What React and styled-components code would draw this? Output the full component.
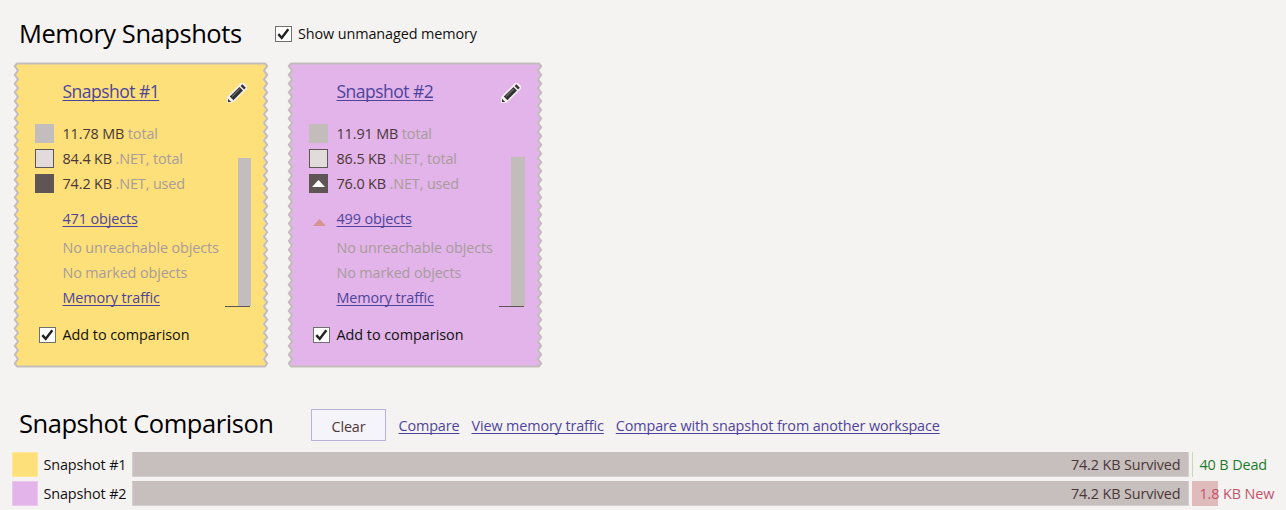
import React from 'react';
import styled, { createGlobalStyle } from 'styled-components';

const GlobalStyle = createGlobalStyle`
  * { box-sizing: border-box; }
  body {
    margin: 0;
    background: #f5f3f2;
    color: #111;
    font: 14.4px/25px "Open Sans", "Noto Sans", sans-serif;
    letter-spacing: -0.12px;
    overflow: hidden;
  }
`;

const Page = styled.main`
  display: flex;
  flex-direction: column;
  height: 510px;
  padding: 14px 0 0 12px;
`;

const Header = styled.header`
  display: flex;
  align-items: center;
  height: 40px;
  padding-left: 7px;
`;

const Heading = styled.h1`
  margin: 0;
  padding-bottom: ${(p) => p.$lift}px;
  width: ${(p) => p.$width}px;
  flex: none;
  white-space: nowrap;
  font-size: 25.5px;
  font-weight: 400;
  line-height: 37px;
  color: #000;
  letter-spacing: -0.45px;
`;

const Link = styled.a`
  color: #4e449c;
  white-space: nowrap;
  justify-self: start;
  text-decoration: underline 1px;
  text-underline-offset: 1.5px;
  text-decoration-skip-ink: none;
`;

const CheckLabel = styled.label`
  display: flex;
  align-items: center;
  gap: ${(p) => p.$gap ?? 6}px;
  white-space: nowrap;
`;

const CheckText = styled.span`
  padding-bottom: ${(p) => p.$lift ?? 0}px;
  letter-spacing: ${(p) => p.$spacing ?? -0.1}px;
`;

const CheckSvg = styled.svg`
  display: block;
  flex: none;
`;

const Cards = styled.section`
  display: flex;
  gap: 18px;
  margin: 8px 0 0 1px;
  height: 306px;
`;

const CardRoot = styled.article`
  position: relative;
  width: 256px;
  height: 306px;
  padding: 17px 18px 0 22px;
`;

const CardShape = styled.svg`
  position: absolute;
  inset: 0;
`;

const CardContent = styled.div`
  position: relative;
  display: flex;
  flex-direction: column;
`;

const CardTitle = styled.div`
  display: flex;
  justify-content: space-between;
  align-items: center;
  height: 25px;
  padding: 0 4px 0 27.5px;
  margin-bottom: 17px;
`;

const TitleLink = styled(Link)`
  font-size: 17.5px;
  letter-spacing: -0.52px;
`;

const PencilSvg = styled.svg`
  display: block;
  margin-top: 3px;
`;

const CardBody = styled.div`
  display: flex;
  justify-content: space-between;
  height: 189px;
`;

const Stats = styled.div`
  display: flex;
  flex-direction: column;
`;

const StatRow = styled.div`
  display: grid;
  grid-template-columns: 19px auto;
  column-gap: 8.5px;
  align-items: center;
  height: 25px;
  flex: none;
  margin-top: ${(p) => p.$top ?? 0}px;
  white-space: nowrap;
  color: #4b3738;
`;

const Muted = styled.span`
  color: #a89c9c;
`;

const Swatch = styled.span`
  display: flex;
  align-items: center;
  justify-content: center;
  width: 19px;
  height: 19px;
  background: ${(p) => p.$fill};
  border: ${(p) => (p.$outlined ? '1px solid #5f5555' : '0')};
`;

const Trend = styled.span`
  display: flex;
  align-items: center;
  justify-content: center;
  padding: 8px 0 0 2px;
`;

const Gauge = styled.div`
  display: flex;
  flex-direction: column;
  align-items: flex-end;
  align-self: flex-end;
  width: 25px;
  margin: 0 1px 3px 0;
  border-bottom: 1px solid #5f5555;
`;

const GaugeBar = styled.div`
  width: ${(p) => p.$width}px;
  height: ${(p) => p.$height}px;
  margin-right: -1px;
  background: ${(p) => p.$fill};
`;

const CardFooter = styled.div`
  display: flex;
  align-items: center;
  height: 25px;
  margin-top: 12px;
  padding-left: 4px;
`;

const Actions = styled.nav`
  display: flex;
  align-items: center;
  gap: 12px;
  padding-top: 2px;
`;

const ClearButton = styled.button`
  width: 75px;
  height: 32px;
  padding: 3px 0 0;
  margin-right: 0.5px;
  border: 1px solid #b8b2d6;
  background: #f5f4fa;
  color: #4b3738;
  font: inherit;
  letter-spacing: -0.15px;
`;

const Comparison = styled.section`
  display: flex;
  flex-direction: column;
  margin-top: 36px;
`;

const Bars = styled.div`
  display: flex;
  flex-direction: column;
  gap: 4px;
  margin-top: 8px;
`;

const BarRow = styled.div`
  display: grid;
  grid-template-columns: 26px 94px 1056.5px 1fr;
  height: 25px;
  line-height: 25px;
  white-space: nowrap;
`;

const ColorKey = styled.span`
  background: ${(p) => p.$fill};
  box-shadow: inset 0 0 0 1px rgba(255, 255, 255, 0.25);
`;

const RowName = styled.span`
  padding-left: 5.5px;
`;

const Survived = styled.span`
  padding-right: 7px;
  text-align: right;
  background: #c6bfbe;
  color: #4b3738;
  border: solid #d5d0cf;
  border-width: 0 1px;
  box-shadow: inset 0 -1px #d5d0cf;
`;

const Change = styled.span`
  margin-left: 3.5px;
  padding-left: 7.5px;
  color: ${(p) => p.$color};
  background: linear-gradient(${(p) => p.$fill}, ${(p) => p.$fill}) 0 0 / ${(p) => p.$amount}px 100% no-repeat;
`;

function Check() {
  return (
    <CheckSvg width="17" height="16" viewBox="0 0 17 16">
      <rect x=".5" y=".5" width="16" height="15" fill="#fff" stroke="#707070" />
      <path d="M3.3 8.2 6.7 11.9 13.3 3.3" fill="none" stroke="#222" strokeWidth="2.5" />
    </CheckSvg>
  );
}

function Pencil() {
  return (
    <PencilSvg width="20" height="20" viewBox="0 0 20 20">
      <path d="M0 20V14L14 0H17L20 3V6L6 19.5Z" fill="#f4efee" />
      <path d="M1 19V15.8L4.2 19ZM2.8 13.6 12.5 4 16 7.5 6.4 17.2ZM13.6 3 15.4 1.3 18.8 4.7 17.1 6.5Z" fill="#333" />
      <path d="M5.2 13.4 12.6 6" stroke="#999191" strokeWidth="1" />
    </PencilSvg>
  );
}

function Triangle({ fill }) {
  return (
    <svg width="13" height="7" viewBox="0 0 13 7">
      <path d="M0 7 6.5 0 13 7Z" fill={fill} />
    </svg>
  );
}

const TEETH = 35;
const PITCH = 8.74;

function ticketPath() {
  const left = [];
  const right = [];
  for (let i = 0; i < TEETH; i += 1) {
    const tip = 4.2 + i * PITCH;
    right.push(`L254.2 ${tip}`);
    left.unshift(`L1.8 ${tip}`);
    if (i < TEETH - 1) {
      right.push(`L251 ${tip + PITCH / 2}`);
      left.unshift(`L5 ${tip + PITCH / 2}`);
    }
  }
  return `M4 1.5H252${right.join('')}L252 304.5H4${left.join('')}Z`;
}

const EDGE_PATH = ticketPath();

function Card({ data }) {
  return (
    <CardRoot>
      <CardShape width="256" height="306" viewBox="0 0 256 306">
        <path d={EDGE_PATH} fill={data.color} stroke={data.edge} strokeWidth="2" strokeLinejoin="round" />
      </CardShape>
      <CardContent>
        <CardTitle>
          <TitleLink>{data.name}</TitleLink>
          <Pencil />
        </CardTitle>
        <CardBody>
          <Stats>
            <StatRow><Swatch $fill={data.edge} /><span>{data.total} <Muted>total</Muted></span></StatRow>
            <StatRow><Swatch $fill="#e1dbdb" $outlined /><span>{data.netTotal} <Muted>.NET, total</Muted></span></StatRow>
            <StatRow>
              <Swatch $fill="#5f5555">{data.grew && <Triangle fill="#fff" />}</Swatch>
              <span>{data.netUsed} <Muted>.NET, used</Muted></span>
            </StatRow>
            <StatRow $top={10}>
              <Trend>{data.grew && <Triangle fill="#d4948f" />}</Trend>
              <Link>{data.objects}</Link>
            </StatRow>
            <StatRow $top={4}><span /><Muted>No unreachable objects</Muted></StatRow>
            <StatRow><span /><Muted>No marked objects</Muted></StatRow>
            <StatRow><span /><Link>Memory traffic</Link></StatRow>
          </Stats>
          <Gauge><GaugeBar $width={data.barWidth} $height={data.bar} $fill={data.edge} /></Gauge>
        </CardBody>
        <CardFooter>
          <CheckLabel $gap={6.5}><Check /><CheckText $spacing={-0.03}>Add to comparison</CheckText></CheckLabel>
        </CardFooter>
      </CardContent>
    </CardRoot>
  );
}

const snapshots = [
  { name: 'Snapshot #1', color: '#fde079', edge: '#c4bdbe', total: '11.78 MB', netTotal: '84.4 KB', netUsed: '74.2 KB', objects: '471 objects', bar: 148, barWidth: 13, grew: false },
  { name: 'Snapshot #2', color: '#e2b4e9', edge: '#c2bdbb', total: '11.91 MB', netTotal: '86.5 KB', netUsed: '76.0 KB', objects: '499 objects', bar: 149, barWidth: 14, grew: true },
];

export default function App() {
  return (
    <Page>
      <GlobalStyle />
      <Header>
        <Heading $width={256} $lift={2}>Memory Snapshots</Heading>
        <CheckLabel><Check /><CheckText $lift={1}>Show unmanaged memory</CheckText></CheckLabel>
      </Header>
      <Cards>
        {snapshots.map((s) => <Card key={s.name} data={s} />)}
      </Cards>
      <Comparison>
        <Header>
          <Heading $width={292} $lift={1}>Snapshot Comparison</Heading>
          <Actions>
            <ClearButton>Clear</ClearButton>
            <Link>Compare</Link>
            <Link>View memory traffic</Link>
            <Link>Compare with snapshot from another workspace</Link>
          </Actions>
        </Header>
        <Bars>
          <BarRow>
            <ColorKey $fill="#fde079" />
            <RowName>Snapshot #1</RowName>
            <Survived>74.2 KB Survived</Survived>
            <Change $color="#1d7a2c" $fill="#c3dcb4" $amount={1}>40 B Dead</Change>
          </BarRow>
          <BarRow>
            <ColorKey $fill="#e2b4e9" />
            <RowName>Snapshot #2</RowName>
            <Survived>74.2 KB Survived</Survived>
            <Change $color="#c0546c" $fill="#e0bbbc" $amount={26}>1.8 KB New</Change>
          </BarRow>
        </Bars>
      </Comparison>
    </Page>
  );
}
